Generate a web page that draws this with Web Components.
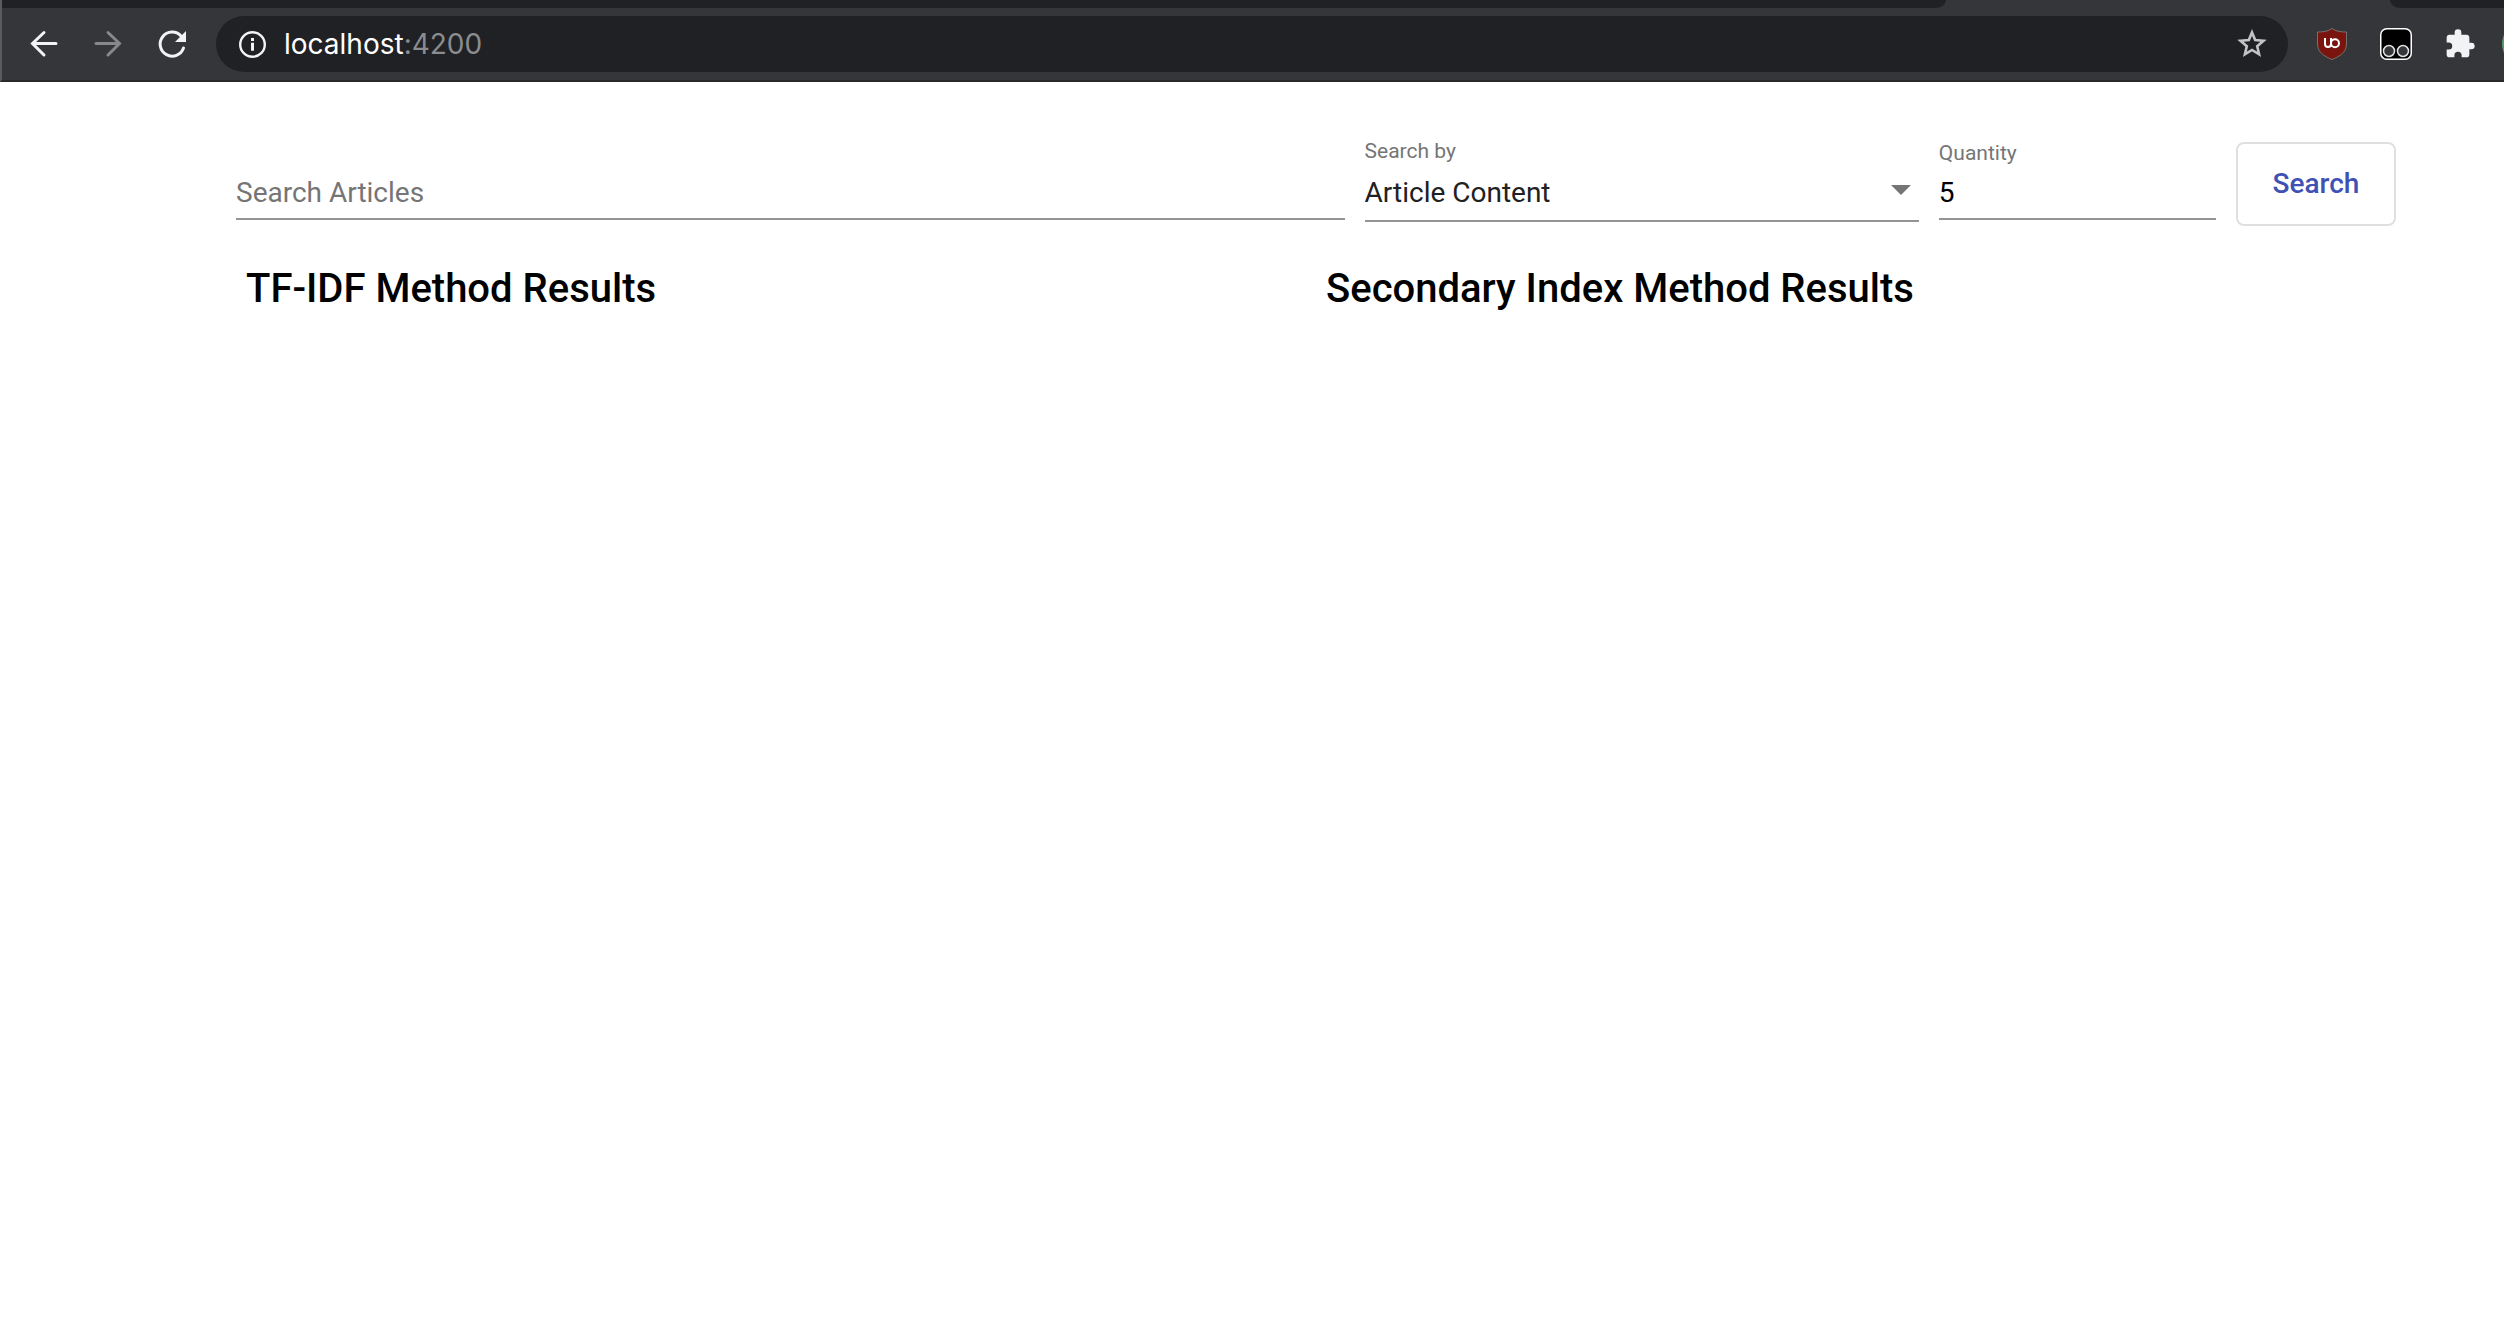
<!DOCTYPE html>
<html lang="en">
<head>
<meta charset="utf-8">
<title>Article Search</title>
<style>
  body { margin: 0; background: #fff; font-family: Roboto, "Liberation Sans", sans-serif; }
</style>
</head>
<body>
<browser-bar></browser-bar>
<article-search></article-search>
<script>
const define = (name, html, init) => {
  const tpl = document.createElement('template');
  tpl.innerHTML = '<style>*{box-sizing:border-box}</style>' + html;
  customElements.define(name, class extends HTMLElement {
    constructor() {
      super();
      this.attachShadow({ mode: 'open' }).append(tpl.content.cloneNode(true));
    }
    connectedCallback() { if (init) init(this, this.shadowRoot); }
  });
};

define('icon-button', `
<style>
  :host { display: block; flex: none; }
  button { display: flex; width: 64px; height: 56px; padding: 0; border: 0; background: none; align-items: center; justify-content: center; }
</style>
<button type="button"><slot></slot></button>`, (host, root) => {
  root.querySelector('button').setAttribute('aria-label', host.getAttribute('label'));
});

define('browser-bar', `
<style>
  :host { display: block; background: #35363a; border-bottom: 2px solid #29282b; border-left: 2px solid #5a5b5e; overflow: hidden; }
  svg { display: block; }
  .tabs { display: flex; justify-content: space-between; height: 8px; }
  .tabs span { background: #202124; }
  .tabs span:first-child { width: 1944px; max-width: 78%; border-bottom-right-radius: 16px 12px; }
  .tabs span:last-child { width: 114px; border-bottom-left-radius: 16px 12px; }
  .row { display: flex; align-items: center; padding: 8px 0 8px 10px; height: 72px; }
  .address { display: flex; flex: 1; min-width: 0; align-items: center; height: 56px; margin: 0 12px; padding: 0 4px; border-radius: 28px; background: #202124; }
  .url { flex: 1; font: 28px/56px Inter, Roboto, sans-serif; color: #8b8c8f; }
  b { font-weight: 400; color: #fff; }
  .tools { display: flex; width: 204px; flex: none; }
</style>
<div class="tabs"><span></span><span></span></div>
<div class="row">
  <icon-button label="Back"><svg width="32" height="32" fill="none" stroke="#f1f3f4" stroke-width="3" stroke-linecap="round"><path d="M28 15.500H5M16 4.500L4.500 15.500 16 27"/></svg></icon-button>
  <icon-button label="Forward"><svg width="32" height="32" fill="none" stroke="#87888b" stroke-width="3" stroke-linecap="round"><path d="M4 15.500h23M16 4.500l11.500 11L16 27"/></svg></icon-button>
  <icon-button label="Reload"><svg width="32" height="32"><path d="M27.500 20A12 12 0 1 1 25 8" fill="none" stroke="#f1f3f4" stroke-width="3" stroke-linecap="round"/><path d="M30 3v11H19z" fill="#f1f3f4"/></svg></icon-button>
  <div class="address">
    <icon-button label="Site information"><svg width="28" height="28"><circle cx="14.500" cy="14.500" r="12.300" fill="none" stroke="#f1f3f4" stroke-width="2.400"/><path d="M13 8h3v3h-3zM13 12.800h3v8h-3z" fill="#f1f3f4"/></svg></icon-button>
    <span class="url"><b>localhost</b>:4200</span>
    <icon-button label="Bookmark"><svg width="30" height="30" fill="none" stroke="#c3c4c6" stroke-width="2.600"><path d="M15 3.400l3.200 7.700 8.300.7-6.300 5.400 1.900 8.100L15 21l-7.100 4.300 1.900-8.100-6.300-5.400 8.300-.7z"/></svg></icon-button>
  </div>
  <div class="tools">
    <icon-button label="uBlock Origin"><svg width="32" height="32"><path d="M16 .5C12 3.500 7 4 1.500 4v12c0 8 6 12 14.500 15.500C24.500 28 30.500 24 30.500 16V4C25 4 20 3.500 16 .5z" fill="#79150e" stroke="#75706f"/><path d="M9 10v6a3 3 0 0 0 6 0v-6M15 15.200a4 4 0 1 0 8 0 4 4 0 1 0-8 0" fill="none" stroke="#fff" stroke-width="2"/></svg></icon-button>
    <icon-button label="Tampermonkey"><svg width="32" height="32"><rect x=".75" y=".75" width="30.500" height="30.500" rx="6" fill="#000" stroke="#fff" stroke-width="1.500"/><g fill="#35363a" stroke="#e2e2e2" stroke-width="1.500"><circle cx="9" cy="23" r="5.500"/><circle cx="23" cy="23" r="5.500"/></g></svg></icon-button>
    <icon-button label="Extensions"><svg width="32" height="32" viewBox="0 0 24 24"><path fill="#f1f3f4" d="M20.500 11H19V7c0-1.100-.9-2-2-2h-4V3.500a2.500 2.500 0 0 0-5 0V5H4c-1.100 0-2 .9-2 2v3.800h1.500a2.700 2.700 0 0 1 0 5.400H2V20c0 1.100.9 2 2 2h3.800v-1.500a2.700 2.700 0 0 1 5.400 0V22H17c1.100 0 2-.9 2-2v-4h1.500a2.500 2.500 0 0 0 0-5z"/></svg></icon-button>
    <icon-button label="Profile"><svg width="44" height="44"><circle cx="22" cy="22" r="22" fill="#5b9a67"/></svg></icon-button>
  </div>
</div>`);

const fieldStyle = `
  :host { display: block; min-width: 0; }
  label { display: block; height: 24px; font-size: 21px; line-height: 22px; color: #757575; }
  input, select { display: block; width: 100%; height: 32px; margin: 11px 0 0; padding: 0; border: 0; background: none; appearance: none; outline: 0; border-radius: 0; font: 28px/32px Roboto, sans-serif; color: #000; }
  input::placeholder { color: #757575; opacity: 1; }
  .line { height: 2px; background: #949494; }`;

define('text-field', `
<style>${fieldStyle}
  .line { margin-top: 9px; }
</style>
<label for="box"><slot></slot></label>
<input id="box">
<div class="line"></div>`, (host, root) => {
  const box = root.querySelector('input');
  box.value = host.getAttribute('value') || '';
  box.placeholder = host.getAttribute('placeholder') || '';
  if (box.placeholder) box.setAttribute('aria-label', box.placeholder);
});

define('select-field', `
<style>${fieldStyle}
  .box { display: flex; align-items: center; }
  select { flex: 1; margin-top: 13px; color: #212121; }
  svg { flex: none; margin: 6px 8px 0 0; }
  .line { margin-top: 11px; }
</style>
<label for="box">Search by</label>
<div class="box"><select id="box"><option>Article Content</option></select><svg width="20" height="10"><path d="M0 0h20L10 10z" fill="#757575"/></svg></div>
<div class="line"></div>`);

define('stroked-button', `
<style>
  :host { display: block; flex: none; }
  button { display: block; width: 160px; height: 84px; padding: 0; border: 2px solid #e0e0e0; border-radius: 8px; background: #fff; color: #3f51b5; font: 500 28px/72px Roboto, sans-serif; }
</style>
<button type="button"><slot></slot></button>`);

define('result-column', `
<style>
  :host { display: block; flex: 1; padding: 0 10px; }
  h2 { margin: 0; font-size: 40px; line-height: 48px; font-weight: 500; color: #000; }
</style>
<h2><slot></slot></h2>`);

define('article-search', `
<style>
  :host { display: block; padding: 60px 108px 0 236px; }
  form, .results { display: flex; }
  form { gap: 20px; }
  text-field, select-field { flex: 1 1 0; }
  .wide { flex-grow: 4; }
  select-field { flex-grow: 2; margin-top: -2px; }
  .results { margin-top: 39px; }
</style>
<form>
  <text-field class="wide" placeholder="Search Articles"></text-field>
  <select-field></select-field>
  <text-field value="5">Quantity</text-field>
  <stroked-button>Search</stroked-button>
</form>
<section class="results">
  <result-column>TF-IDF Method Results</result-column>
  <result-column>Secondary Index Method Results</result-column>
</section>`);
</script>
</body>
</html>
